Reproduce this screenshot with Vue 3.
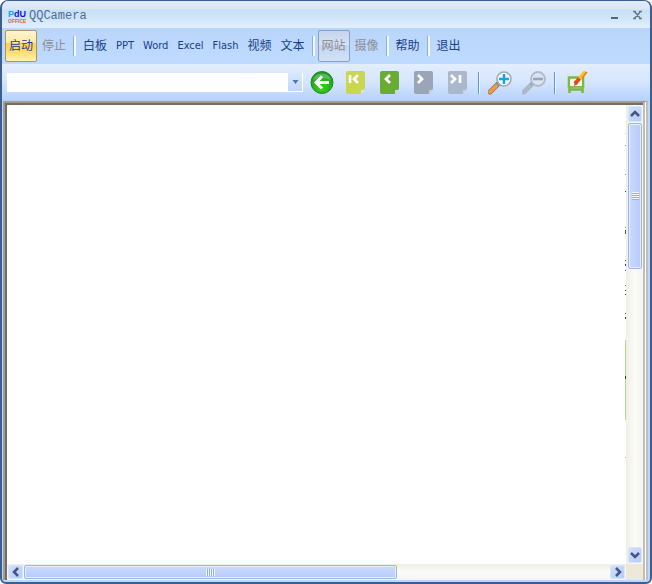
<script setup>
import { ref } from 'vue'

const address = ref('')
const groups = [
  [
    { label: '启动', state: 'active' },
    { label: '停止', state: 'muted' },
  ],
  [
    { label: '白板' },
    { label: 'PPT', state: 'latin' },
    { label: 'Word', state: 'latin' },
    { label: 'Excel', state: 'latin' },
    { label: 'Flash', state: 'latin' },
    { label: '视频' },
    { label: '文本' },
  ],
  [
    { label: '网站', state: 'pressed' },
    { label: '摄像', state: 'muted' },
  ],
  [{ label: '帮助' }],
  [{ label: '退出' }],
]
const pages = [
  { name: '首页', fill: '#c9d650', fold: '#e4ecb4', mark: 'M4 4v8M12 4L8 8l4 4' },
  { name: '上一页', fill: '#68ac33', fold: '#cfe6b4', mark: 'M10 4L6 8l4 4' },
  { name: '下一页', fill: '#9aa6b8', fold: '#c3cfe2', mark: 'M4 4l4 4-4 4' },
  { name: '末页', fill: '#abb8cb', fold: '#c8d5ea', mark: 'M3 4l4 4-4 4M12 4v8' },
]
// Slivers of the hosted page that show at the edge of the view.
const specks = [
  [28, 1, '#e8c9a0'], [40, 1, '#58b868'], [69, 1, '#58b868'], [86, 1, '#444'],
  [122, 1, '#58b868'], [125, 4, '#3c6b45'], [155, 1, '#555'], [159, 2, '#444'],
  [165, 1, '#555'], [180, 1, '#a66'], [185, 1, '#333'], [189, 1, '#333'],
  [208, 1, '#555'], [212, 2, '#333'], [235, 80, '#b2dd90'], [271, 3, '#333'],
  [352, 1, '#e2a58c'],
]
const verticalThumb = 34.4
const horizontalThumb = 63.7
</script>

<template>
  <main class="window">
    <header class="titlebar">
      <svg class="logo" width="20" height="18" viewBox="0 0 20 18" aria-hidden="true">
        <text class="logo-top" x="0" y="10"><tspan fill="#16a5e8">P</tspan><tspan fill="#1212e0">dU</tspan></text>
        <text class="logo-sub" x="0" y="16" fill="#f0621c">OFFICE</text>
      </svg>
      <h1>QQCamera</h1>
      <button class="win-btn" aria-label="最小化">
        <svg width="11" height="11" viewBox="0 0 11 11"><path d="M2 8H9" stroke="#536780" stroke-width="2" /></svg>
      </button>
      <button class="win-btn" aria-label="关闭">
        <svg width="11" height="11" viewBox="0 0 11 11"><path d="M2.500 1.500L8.500 8.500M8.500 1.500L2.500 8.500M1 1.500H4M7 1.500H10M1 8.500H4M7 8.500H10" stroke="#66788f" stroke-width="1.600" /></svg>
      </button>
    </header>

    <nav class="menu">
      <div v-for="(group, i) in groups" :key="i" class="group">
        <button v-for="item in group" :key="item.label" class="item" :class="item.state">{{ item.label }}</button>
      </div>
    </nav>

    <div class="tools">
      <div class="combo">
        <input v-model="address" type="text" aria-label="地址" />
        <button class="drop" aria-label="展开">
          <svg width="7" height="4" viewBox="0 0 7 4"><path d="M0.500 0h6L3.500 4z" fill="#4a78b5" /></svg>
        </button>
      </div>
      <button class="tool" aria-label="后退">
        <svg width="24" height="24" viewBox="0 0 24 24">
          <defs>
            <radialGradient id="go" cx=".5" cy=".75" r=".7">
              <stop offset="0" stop-color="#3cd01c" /><stop offset="1" stop-color="#1c9a22" />
            </radialGradient>
          </defs>
          <circle cx="12" cy="11.500" r="11" fill="url(#go)" stroke="#27822c" />
          <path d="M3 9a9.500 9.500 0 0 1 18 0q-9-4-18 0z" fill="#fff" opacity=".25" />
          <path d="M19 11.500H7M12 5.500l-6 6 6 6" fill="none" stroke="#fff" stroke-width="3" />
        </svg>
      </button>
      <button v-for="p in pages" :key="p.name" class="tool" :aria-label="p.name">
        <svg width="24" height="24" viewBox="-2 0 24 24">
          <path d="M2 0H17q2 0 2 2V18l-4 5H2q-2 0-2-2V2q0-2 2-2z" :fill="p.fill" />
          <path d="M19.500 18l-5 5.500q1-2 .5-4.500q2 .5 4.500-1z" :fill="p.fold" />
          <path :d="p.mark" fill="none" stroke="#fff" stroke-width="2.700" />
        </svg>
      </button>
      <span class="rule"></span>
      <button class="tool" aria-label="放大">
        <svg width="24" height="24" viewBox="0 0 24 24">
          <path d="M2 21l8-8" stroke="#8f7468" stroke-width="5" stroke-linecap="round" />
          <path d="M2 21l7-7" stroke="#f29a3c" stroke-width="3.500" stroke-linecap="round" />
          <path d="M9 14l3-3" stroke="#858da0" stroke-width="3" />
          <circle cx="16" cy="8" r="7" fill="#f4fbff" stroke="#a3a9b5" stroke-width="1.600" />
          <path d="M16 3v10M11 8h10" stroke="#1aa4e4" stroke-width="2.500" />
        </svg>
      </button>
      <button class="tool" aria-label="缩小">
        <svg width="24" height="24" viewBox="0 0 24 24">
          <path d="M2 21l8-8" stroke="#aeb7c5" stroke-width="5" stroke-linecap="round" />
          <path d="M9 14l3-3" stroke="#9ba4b4" stroke-width="3" />
          <circle cx="16" cy="8" r="7" fill="#d9e3f1" stroke="#b2bac7" stroke-width="1.800" />
          <path d="M11 8h10" stroke="#98a4b8" stroke-width="2.500" />
        </svg>
      </button>
      <span class="rule"></span>
      <button class="tool" aria-label="画板">
        <svg width="24" height="24" viewBox="0 0 24 24">
          <path d="M5 6.500h14v9H5zM5.500 15v7M18.500 15v7M5 18.500h14" fill="none" stroke="#80b83f" stroke-width="2.600" />
          <path d="M6 8h12v7H6z" fill="#f4faee" />
          <path d="M10 15l1-5 3 3z" fill="#c9571d" />
          <path d="M11 12.500l5-5.500" stroke="#e8471c" stroke-width="4" />
          <path d="M15.500 7.500l6-7" stroke="#f8c51e" stroke-width="3.500" />
          <path d="M18 7l5-6" stroke="#ef7b22" stroke-width="1.500" />
        </svg>
      </button>
    </div>

    <section class="frame">
      <div class="view">
        <svg class="specks" width="1" height="440" viewBox="0 0 1 440" aria-hidden="true">
          <rect v-for="(s, i) in specks" :key="i" x="0" :y="s[0]" width="1" :height="s[1]" :fill="s[2]" />
        </svg>
      </div>
      <div class="bar vertical">
        <button class="arrow" aria-label="向上滚动">
          <svg width="10" height="10" viewBox="0 0 10 10"><path d="M1 7l4-4 4 4" /></svg>
        </button>
        <div class="track">
          <div class="thumb" :style="{ height: verticalThumb + '%' }"><span class="grip"></span></div>
        </div>
        <button class="arrow" aria-label="向下滚动">
          <svg width="10" height="10" viewBox="0 0 10 10"><path d="M1 3l4 4 4-4" /></svg>
        </button>
      </div>
      <div class="bar horizontal">
        <button class="arrow" aria-label="向左滚动">
          <svg width="10" height="10" viewBox="0 0 10 10"><path d="M7 1L3 5l4 4" /></svg>
        </button>
        <div class="track">
          <div class="thumb" :style="{ width: horizontalThumb + '%' }"><span class="grip"></span></div>
        </div>
        <button class="arrow" aria-label="向右滚动">
          <svg width="10" height="10" viewBox="0 0 10 10"><path d="M3 1l4 4-4 4" /></svg>
        </button>
      </div>
      <div class="corner"></div>
    </section>
  </main>
</template>

<style>
body {
  margin: 0;
  background: #fff;
}
</style>

<style scoped>
* {
  box-sizing: border-box;
}

.window {
  display: flex;
  flex-direction: column;
  height: 100vh;
  border: 2px solid #3b5e92;
  border-top-width: 1px;
  border-radius: 8px 8px 6px 6px;
  background: #bcd7fc;
  overflow: hidden;
  font-family: "DejaVu Sans Condensed", "Noto Sans CJK SC", sans-serif;
}

button {
  margin: 0;
  padding: 0;
  border: 0;
  background: none;
  font-family: inherit;
}

svg {
  display: block;
}

.titlebar {
  display: flex;
  flex: none;
  align-items: center;
  height: 27px;
  padding: 2px 1px 0 6px;
  background: linear-gradient(#e3ebf8 0, #d8e6f8 8px, #c9dff5 9px, #d5e8fa 20px, #e2effc 27px);
}

.logo-top {
  font: bold 9px "Liberation Sans", sans-serif;
}

.logo-sub {
  font: bold 5px "Liberation Sans", sans-serif;
}

.titlebar h1 {
  flex: 1;
  margin: 0 0 0 1px;
  font: 12px/16px "Liberation Mono", monospace;
  color: #4b6c98;
}

.win-btn {
  display: flex;
  align-items: center;
  justify-content: center;
  width: 23px;
  height: 20px;
}

.menu {
  display: flex;
  flex: none;
  align-items: center;
  height: 36px;
  padding: 0 3px;
  background: linear-gradient(#b9d6fa, #bfdaff);
}

.group {
  display: flex;
  align-items: center;
  gap: 1px;
}

.group + .group::before {
  content: "";
  width: 2px;
  height: 20px;
  margin: 0 2px 0 3px;
  border-left: 1px solid #88b2e4;
  background: #f4f9ff;
}

.item {
  height: 32px;
  padding: 0 3px;
  border: 1px solid transparent;
  border-radius: 2px;
  font-size: 12px;
  line-height: 20px;
  color: #173f88;
}

.item.latin {
  font-size: 11px;
}

.item.muted {
  color: #8d8d92;
}

.item.active {
  border-color: #a99668;
  background: linear-gradient(#fff5d3, #ffe9a0 38%, #ffd252 42%, #ffdc70 70%, #fff3b4);
}

.item.pressed {
  border-color: #87a0c4;
  background: linear-gradient(#c5d5ed, #d6e2f4 45%, #c3d5ef 50%, #d2e1f7);
  color: #8d8d92;
}

.tools {
  display: flex;
  flex: none;
  align-items: center;
  gap: 10px;
  height: 37px;
  padding: 0 5px;
  background: linear-gradient(#e3eefe, #d4e5fd 50%, #b5d1fb);
}

.combo {
  display: flex;
  flex: 0 1 296px;
  height: 19px;
  margin-right: -3px;
  padding: 0 1px 1px 0;
  background: #fff;
}

.combo input {
  flex: 1;
  min-width: 0;
  padding: 0 4px;
  border: 0;
  background: #fff;
  font-size: 12px;
  outline: 0;
}

.drop {
  display: flex;
  align-items: center;
  justify-content: center;
  width: 14px;
  background: linear-gradient(#d9e8fc, #bfd8f8);
}

.tool {
  flex: none;
  width: 24px;
  height: 24px;
}

.rule {
  width: 2px;
  height: 22px;
  margin: 0 -2px;
  border-left: 1px solid #5c99dc;
  background: #eef6ff;
}

.frame {
  display: grid;
  flex: 1;
  grid-template: minmax(0, 1fr) 16px / minmax(0, 1fr) 17px;
  min-height: 0;
  margin: 0 2px 2px 1px;
  padding: 2px 0 0 2px;
  border: 2px solid #a39c90;
  border-right: 5px double #c1bdb8;
  border-bottom: 0;
  background: #fff;
  box-shadow: inset 2px 2px 0 #746c60;
}

.view {
  display: flex;
  justify-content: flex-end;
  overflow: hidden;
  background: #fff;
}

.bar {
  display: flex;
  gap: 1px;
  padding: 1px;
}

.vertical {
  flex-direction: column;
  padding-left: 2px;
  background: linear-gradient(90deg, #efeee5, #fbfbf8 50%, #f6f5ee);
}

.horizontal {
  background: linear-gradient(#efeee5, #fbfbf8 50%, #f6f5ee);
}

.arrow {
  display: flex;
  flex: none;
  align-items: center;
  justify-content: center;
  border: 1px solid #d9e4fa;
  border-radius: 2px;
  background: linear-gradient(135deg, #d3e0fd, #b4cbf8);
}

.vertical .arrow {
  height: 16px;
}

.horizontal .arrow {
  width: 15px;
}

.arrow path {
  fill: none;
  stroke: #41597e;
  stroke-width: 2.5;
}

.track {
  flex: 1;
  min-width: 0;
  min-height: 0;
}

.thumb {
  display: flex;
  align-items: center;
  justify-content: center;
  border: 1px solid #9bb7ea;
  border-radius: 2px;
  box-shadow: inset 0 0 0 1px #e5edff;
}

.vertical .thumb {
  background: linear-gradient(90deg, #cbdafe, #b7cbf9);
}

.horizontal .thumb {
  height: 100%;
  background: linear-gradient(#cbdafe, #b7cbf9);
}

.vertical .grip {
  width: 7px;
  height: 8px;
  background: repeating-linear-gradient(#f2f6ff 0 1px, #91b0ee 1px 2px);
}

.horizontal .grip {
  width: 9px;
  height: 7px;
  background: repeating-linear-gradient(90deg, #f2f6ff 0 1px, #91b0ee 1px 2px);
}

.corner {
  background: #ece9d8;
}
</style>
